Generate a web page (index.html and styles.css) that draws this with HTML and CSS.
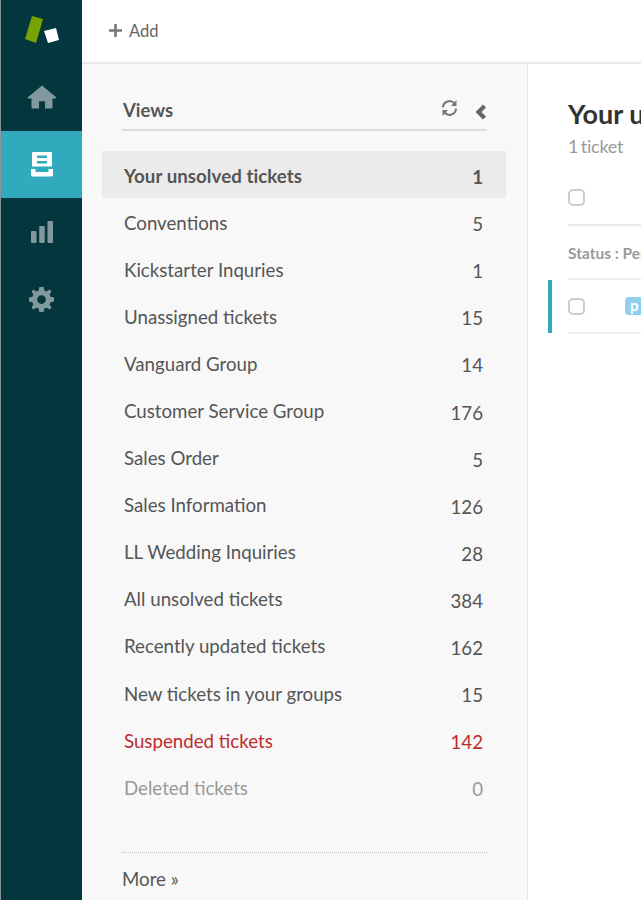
FILE: index.html
```html
<!DOCTYPE html>
<html lang="en">
<head>
<meta charset="utf-8">
<title>Views</title>
<link rel="stylesheet" href="styles.css">
</head>
<body>
<div class="app">
  <nav class="rail">
    <div class="logo">
      <svg width="36" height="32" viewBox="0 0 36 32"><polygon class="logo-green" points="8,1 19,4 12,28 1,24"/><polygon class="logo-white" points="20,16 32,13 35,25 24,28"/></svg>
    </div>
    <a class="rail-item home"><svg width="30" height="24" viewBox="0 0 30 26" preserveAspectRatio="none"><path class="ico" d="M15 0.500L29.500 13.500L29 14.500H25.500V25.500H18V17.500H12V25.500H4.500V14.500H1L0.500 13.500Z"/></svg></a>
    <a class="rail-item active"><svg width="22" height="25" viewBox="0 0 22 25"><path class="ico-w" fill-rule="evenodd" d="M2 0H20Q21 0 21 1V14.500H1V1Q1 0 2 0ZM6 3.500V6H16V3.500ZM6 9V11.500H16V9Z"/><path class="ico-w" d="M0 17H4.500V20H17.500V17H22V23Q22 24.500 20.500 24.500H1.500Q0 24.500 0 23Z"/></svg></a>
    <a class="rail-item"><svg width="22" height="22" viewBox="0 0 22 22"><g class="ico"><rect x="0" y="10" width="5.500" height="12" rx="1"/><rect x="8.200" y="5" width="5.500" height="17" rx="1"/><rect x="16.500" y="0" width="5.500" height="22" rx="1"/></g></svg></a>
    <a class="rail-item gear"><svg width="25" height="25" viewBox="0 0 24 24"><path class="ico" fill-rule="evenodd" d="M10 0H14L14.700 3.300L16.900 4.200L19.800 2.400L21.600 4.200L19.800 7.100L20.700 9.300L24 10V14L20.700 14.700L19.800 16.900L21.600 19.800L19.800 21.600L16.900 19.800L14.700 20.700L14 24H10L9.300 20.700L7.100 19.800L4.200 21.600L2.400 19.800L4.200 16.900L3.300 14.700L0 14V10L3.300 9.300L4.200 7.100L2.400 4.200L4.200 2.400L7.100 4.200L9.300 3.300ZM12 7.800A4.200 4.200 0 1 0 12 16.200A4.200 4.200 0 1 0 12 7.800Z"/></svg></a>
  </nav>
  <div class="main">
    <header class="topbar">
      <a class="add"><svg width="13" height="13" viewBox="0 0 13 13"><path class="plus" d="M5.200 0H7.800V5.200H13V7.800H7.800V13H5.200V7.800H0V5.200H5.200Z"/></svg><span>Add</span></a>
    </header>
    <div class="columns">
      <aside class="views">
        <div class="views-head">
          <h2>Views</h2>
          <div class="views-tools">
            <svg class="refresh" width="17" height="18" viewBox="0 0 17 18"><path d="M2 8.500A6.500 6.500 0 0 1 13.500 4.500M15 9.500A6.500 6.500 0 0 1 3.500 13.500"/><path class="fillin" d="M15.500 1V7H10ZM1.500 17V11H7Z"/></svg>
            <svg class="chevron" width="11" height="16" viewBox="0 0 11 16"><path class="chev" d="M8 0.500L11 3.500L6.500 8L11 12.500L8 15.500L0.500 8Z"/></svg>
          </div>
        </div>
        <ul class="view-list">
          <li class="view current"><span>Your unsolved tickets</span><b>1</b></li>
          <li class="view"><span>Conventions</span><b>5</b></li>
          <li class="view"><span>Kickstarter Inquries</span><b>1</b></li>
          <li class="view"><span>Unassigned tickets</span><b>15</b></li>
          <li class="view"><span>Vanguard Group</span><b>14</b></li>
          <li class="view"><span>Customer Service Group</span><b>176</b></li>
          <li class="view"><span>Sales Order</span><b>5</b></li>
          <li class="view"><span>Sales Information</span><b>126</b></li>
          <li class="view"><span>LL Wedding Inquiries</span><b>28</b></li>
          <li class="view"><span>All unsolved tickets</span><b>384</b></li>
          <li class="view"><span>Recently updated tickets</span><b>162</b></li>
          <li class="view"><span>New tickets in your groups</span><b>15</b></li>
          <li class="view suspended"><span>Suspended tickets</span><b>142</b></li>
          <li class="view deleted"><span>Deleted tickets</span><b>0</b></li>
        </ul>
        <div class="more">More »</div>
      </aside>
      <section class="content">
        <h1>Your unsolved tickets</h1>
        <p class="count">1 ticket</p>
        <div class="head-row"><i class="check"></i></div>
        <div class="group">Status : Pending</div>
        <div class="ticket"><i class="check"></i><span class="badge">p</span></div>
      </section>
    </div>
  </div>
</div>
</body>
</html>
```
FILE: styles.css
```css
* { box-sizing: border-box; }
html, body { margin: 0; height: 100%; overflow: hidden; }
body { font-family: Lato, "Liberation Sans", sans-serif; color: #555; background: #fff; }
.app { display: flex; width: 641px; height: 900px; overflow: hidden; }
.rail { width: 82px; flex: none; background: #03363d; border-left: 1px solid #8a9294; display: flex; flex-direction: column; }
.logo { height: 64px; padding: 15px 0 0 23px; }
.logo svg { display: block; }
.logo-green { fill: #78a300; }
.logo-white { fill: #fff; }
.rail-item { height: 67px; display: flex; align-items: center; justify-content: center; }
.rail-item.active { background: #30aabc; }
.rail-item.home { padding-bottom: 2px; }
.rail-item.gear { padding-top: 1px; }
.ico { fill: #81989c; }
.ico-w { fill: #fff; }
.main { flex: 1; min-width: 0; display: flex; flex-direction: column; }
.topbar { height: 64px; flex: none; border-bottom: 2px solid #e9e9e9; display: flex; align-items: center; padding: 0 0 1px 27px; }
.add { display: flex; align-items: center; gap: 7px; font-size: 16.500px; color: #666; }
.plus { fill: #777; }
.columns { flex: 1; display: flex; min-height: 0; }
.views { width: 446px; flex: none; background: #f8f8f8; border-right: 1px solid #e4e4e4; padding: 0 21px 0 20px; }
.views-head { height: 67px; margin: 0 19px 20px 20px; border-bottom: 2px solid #ddd; display: flex; align-items: center; justify-content: space-between; padding: 27px 0 0 1px; }
.views-head h2 { margin: 0; font-size: 18.500px; font-weight: 700; color: #555; }
.views-tools { display: flex; align-items: flex-start; gap: 17px; height: 22px; margin: 0 1px 0 0; }
.chevron { margin-top: 5px; }
.refresh path { fill: none; stroke: #777; stroke-width: 2; }
.refresh .fillin { fill: #777; stroke: none; }
.chev { fill: #666; }
.view-list { list-style: none; margin: 0; padding: 0; }
.view { height: 47.100px; display: flex; align-items: center; justify-content: space-between; padding: 2px 23px 0 22px; font-size: 18.700px; color: #555; }
.view b { font-weight: 400; padding-top: 3px; }
.view.current { background: #ebebeb; font-weight: 700; }
.view.current span { letter-spacing: 0.050px; }
.view.current b { font-weight: 700; }
.view.suspended { color: #bd2c2c; }
.view.deleted { color: #999; }
.more { margin: 42px 19px 0 20px; border-top: 1px dotted #bbb; padding: 15px 0 0 0; font-size: 18.700px; color: #555; }
.content { flex: 1; min-width: 0; padding: 35px 0 0 40px; overflow: hidden; white-space: nowrap; }
.content h1 { margin: 0; font-size: 27px; line-height: 30px; font-weight: 700; color: #333; }
.count { margin: 5px 0 0; font-size: 18px; line-height: 24px; color: #999; word-spacing: -2px; letter-spacing: -0.200px; }
.check { display: block; flex: none; width: 17px; height: 17px; border: 2px solid #ccc; border-radius: 5px; background: #fff; }
.head-row { height: 59px; padding-top: 22px; margin-top: 9px; border-bottom: 2px solid #e9e9e9; }
.group { height: 54px; line-height: 55px; font-size: 15.500px; font-weight: 700; color: #999; border-bottom: 2px solid #eee; }
.ticket { height: 54px; display: flex; align-items: center; gap: 40px; border-bottom: 2px solid #eee; position: relative; }
.ticket::before { content: ""; position: absolute; left: -20px; top: 0; width: 4px; height: 53px; background: #30aabc; }
.badge { display: block; flex: none; width: 40px; height: 18px; background: #8fd0ee; color: #fff; border-radius: 4px; font-size: 15px; font-weight: 700; line-height: 17px; padding-left: 5px; }
```
